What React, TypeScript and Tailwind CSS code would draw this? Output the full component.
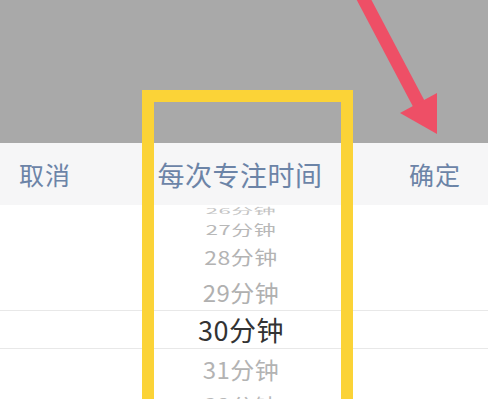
const font = { fontFamily: '"Noto Sans CJK SC", "Noto Sans", sans-serif' }

const items = [
  { label: '26分钟', h: 'h-[12px]', cls: 'text-[22px] text-[#c4c4c4] scale-y-[0.35]' },
  { label: '27分钟', h: 'h-[23px]', cls: 'text-[22px] text-[#b8b8b8] scale-y-[0.62]' },
  { label: '28分钟', h: 'h-[34px]', cls: 'text-[23px] text-[#b3b3b3] scale-y-[0.82]' },
  { label: '29分钟', h: 'h-[36px]', cls: 'text-[24px] text-[#b0b0b0] scale-y-[0.95]' },
]

export default function App() {
  return (
    <div className="relative w-[488px] h-[399px] overflow-hidden bg-white" style={font}>
      {/* dimmed backdrop */}
      <div className="h-[143px] bg-[#a9a9a9]" />

      {/* picker header */}
      <div className="h-[62px] bg-[#f6f6f7] flex items-center pl-[19px] pr-[27px] text-[#6c84a7]">
        <span className="text-[25px] leading-none tracking-[1px]">取消</span>
        <span className="flex-1 text-center text-[27px] leading-none tracking-[0.5px]">每次专注时间</span>
        <span className="text-[25px] leading-none tracking-[1px]">确定</span>
      </div>

      {/* wheel */}
      <div className="flex flex-col pr-[6px]">
        {items.map(it => (
          <div key={it.label} className={`${it.h} flex items-center justify-center overflow-visible`}>
            <span className={`${it.cls} leading-none tracking-[0.5px] inline-block`}>{it.label}</span>
          </div>
        ))}
        <div className="h-[39px] -mr-[6px] pr-[6px] border-y border-[#e8e8e8] flex items-center justify-center">
          <span className="text-[27px] leading-none text-[#333333] tracking-[0.5px]">30分钟</span>
        </div>
        <div className="h-[40px] flex items-center justify-center">
          <span className="text-[24px] leading-none text-[#b3b3b3] tracking-[0.5px] inline-block scale-y-[0.95]">31分钟</span>
        </div>
        <div className="h-[30px] flex items-center justify-center">
          <span className="text-[23px] leading-none text-[#b8b8b8] tracking-[0.5px] inline-block scale-y-[0.85]">32分钟</span>
        </div>
      </div>

      {/* yellow highlight frame */}
      <div className="absolute left-[142px] top-[90px] w-[211px] h-[330px] border-[12px] border-[#fbd337]" />

      {/* red arrow */}
      <svg className="absolute left-0 top-0" width="488" height="399" viewBox="0 0 488 399">
        <line x1="362" y1="-4" x2="420" y2="106" stroke="#ee4f66" strokeWidth="13" />
        <polygon points="400,113 437,93 437,134" fill="#ee4f66" />
      </svg>
    </div>
  )
}
